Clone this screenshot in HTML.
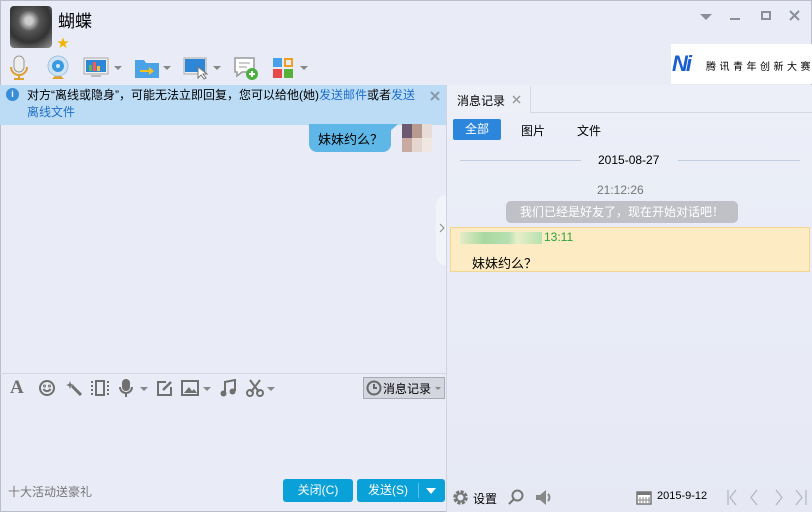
<!DOCTYPE html>
<html><head><meta charset="utf-8"><style>
*{margin:0;padding:0;box-sizing:border-box}
body{width:812px;height:512px;overflow:hidden;background:#e9ebf6;font-family:"Liberation Sans","Noto Sans CJK SC",sans-serif;font-size:12px;color:#000;position:relative}
.a{position:absolute}
.arr{position:absolute;width:0;height:0;border-left:4px solid transparent;border-right:4px solid transparent;border-top:4px solid #888}
svg{position:absolute}
</style></head><body>
<div class="a" style="left:0;top:0;width:812px;height:512px;border:1px solid #b9bccb"></div>
<!-- avatar -->
<div class="a" style="left:10px;top:6px;width:42px;height:42px;border-radius:4px;background:radial-gradient(circle at 45% 35%,#ccc 0 10%,#555 30%,#333 60%,#999 100%)"></div>
<div class="a" style="left:58px;top:7px;font-size:17px">蝴蝶</div>
<div class="a" style="left:57px;top:34px;color:#f0b400;font-size:12px">★</div>
<!-- window controls -->
<div class="arr" style="left:700px;top:14px;border-width:6px 6px 0 6px;border-top-color:#8a8f99"></div>
<div class="a" style="left:730px;top:18px;width:10px;height:2px;background:#8a8f99"></div>
<div class="a" style="left:761px;top:11px;width:10px;height:9px;border:2px solid #8a8f99"></div>
<svg style="left:789px;top:10px" width="11" height="11"><path d="M1 1L10 10M10 1L1 10" stroke="#8a8f99" stroke-width="2"/></svg>
<!-- toolbar -->
<svg style="left:8px;top:55px" width="22" height="26"><rect x="6" y="1" width="10" height="16" rx="5" fill="#eee" stroke="#999"/><path d="M3 12a8 8 0 0 0 16 0M11 20v4M6 24h10" stroke="#e0a030" stroke-width="2" fill="none"/></svg>
<svg style="left:45px;top:55px" width="26" height="26"><path d="M7 24l6-6 6 6z" fill="#e0a030"/><circle cx="13" cy="11" r="10" fill="#cfe3f5" stroke="#9fc1e0"/><circle cx="13" cy="11" r="6" fill="#3a9ae0"/><circle cx="13" cy="11" r="2" fill="#cfe8fa"/></svg>
<svg style="left:83px;top:57px" width="26" height="22"><rect x="1" y="1" width="24" height="16" fill="#eee" stroke="#aaa"/><rect x="3" y="3" width="20" height="12" fill="#2d86d6"/><rect x="6" y="8" width="3" height="6" fill="#5b5"/><rect x="10" y="5" width="3" height="9" fill="#f55"/><rect x="14" y="9" width="3" height="5" fill="#fb3"/><rect x="8" y="18" width="10" height="2" fill="#bbb"/></svg>
<div class="arr" style="left:114px;top:66px"></div>
<svg style="left:134px;top:57px" width="26" height="22"><path d="M1 3h9l2 3h13v15H1z" fill="#4aa3e6"/><path d="M6 13h9v-3l5 4-5 4v-3H6z" fill="#f5c020"/></svg>
<div class="arr" style="left:163px;top:66px"></div>
<svg style="left:183px;top:56px" width="28" height="24"><rect x="1" y="2" width="22" height="16" fill="#eee" stroke="#aaa"/><rect x="2" y="3" width="20" height="13" fill="#2d86d6"/><path d="M15 11v11l3-3 3 4 2-1-3-4h4z" fill="#fff" stroke="#777"/></svg>
<div class="arr" style="left:213px;top:66px"></div>
<svg style="left:233px;top:56px" width="26" height="26"><path d="M2 2h19v14H9l-5 4v-4H2z" fill="#fff" stroke="#999" stroke-width="1.5"/><path d="M6 7h11M6 11h8" stroke="#999"/><circle cx="19" cy="18" r="6" fill="#4ab040"/><path d="M19 15v6M16 18h6" stroke="#fff" stroke-width="2"/></svg>
<div class="a" style="left:273px;top:58px;width:9px;height:9px;background:#4aa0e8"></div>
<div class="a" style="left:284px;top:58px;width:9px;height:9px;border:2px solid #f0a020"></div>
<div class="a" style="left:273px;top:69px;width:9px;height:9px;background:#e84848"></div>
<div class="a" style="left:284px;top:69px;width:9px;height:9px;background:#58b038"></div>
<div class="arr" style="left:300px;top:66px"></div>
<!-- ad -->
<div class="a" style="left:671px;top:44px;width:141px;height:40px;background:#fff"></div>
<div class="a" style="left:672px;top:51px;font-style:italic;font-weight:bold;font-size:22px;color:#1a5fd0;letter-spacing:-2px">Ni</div>
<div class="a" style="left:706px;top:58px;font-size:10px;letter-spacing:3.5px;white-space:nowrap">腾讯青年创新大赛</div>
<!-- notice -->
<div class="a" style="left:0;top:85px;width:446px;height:40px;background:#bcdcf5"></div>
<div class="a" style="left:6px;top:88px;width:13px;height:13px;border-radius:50%;background:#3a8ed8;color:#fff;font-size:9px;text-align:center;line-height:13px;font-weight:bold">i</div>
<div class="a" style="left:27px;top:87px;width:395px;line-height:17px">对方“离线或隐身”，可能无法立即回复，您可以给他(她)<span style="color:#1e6fc8">发送邮件</span>或者<span style="color:#1e6fc8">发送离线文件</span></div>
<svg style="left:430px;top:91px" width="10" height="10"><path d="M1 1L9 9M9 1L1 9" stroke="#8a9aaa" stroke-width="2"/></svg>
<!-- chat bubble -->
<div class="a" style="left:309px;top:124px;width:82px;height:28px;background:#5fb7e8;border-radius:0 0 8px 8px;padding:5px 0 0 9px;font-size:13px">妹妹约么？</div>
<div class="a" style="left:389px;top:124px;width:9px;height:8px;background:#5fb7e8;clip-path:polygon(0 0,100% 0,0 100%)"></div>
<div class="a" style="left:402px;top:124px;width:30px;height:28px;background:linear-gradient(90deg,#6e5a70 0 33%,#b79a90 33% 66%,#e8dcd8 66%)"></div>
<div class="a" style="left:402px;top:138px;width:30px;height:14px;background:linear-gradient(90deg,#c8aaa0 0 33%,#e6d6d0 33% 66%,#f0e6e2 66%)"></div>
<!-- splitter -->
<div class="a" style="left:446px;top:85px;width:1px;height:427px;background:#d0d4e0"></div>
<div class="a" style="left:436px;top:195px;width:10px;height:70px;background:#f2f4fa;border-radius:10px 0 0 10px"></div>
<svg style="left:439px;top:223px" width="6" height="10"><path d="M1 1l4 4-4 4" stroke="#888" fill="none"/></svg>
<!-- input toolbar -->
<div class="a" style="left:0;top:373px;width:446px;height:1px;background:#d4d7e2"></div>
<div class="a" style="left:10px;top:377px;color:#707070;font-size:19px;font-family:'Liberation Serif',serif;font-weight:bold">A</div>
<svg style="left:38px;top:379px" width="18" height="18" fill="none" stroke="#707070" stroke-width="2"><circle cx="9" cy="9" r="7"/><path d="M5.5 10a4 4 0 0 0 7 0"/><circle cx="6.5" cy="7" r=".5"/><circle cx="11.5" cy="7" r=".5"/></svg>
<svg style="left:66px;top:380px" width="16" height="16"><path d="M4 1l1 3 3 1-3 1-1 3-1-3-3-1 3-1z" fill="#707070"/><path d="M6 6l9 9" stroke="#707070" stroke-width="3"/></svg>
<svg style="left:90px;top:379px" width="20" height="18" fill="none" stroke="#707070" stroke-width="2"><rect x="6" y="2" width="8" height="14"/><path d="M2 2v14M18 2v14" stroke-dasharray="2 2"/></svg>
<svg style="left:119px;top:378px" width="14" height="20"><rect x="3" y="1" width="8" height="12" rx="4" fill="#707070"/><path d="M1 9a6 6 0 0 0 12 0M7 15v4" stroke="#707070" stroke-width="2" fill="none"/></svg>
<div class="arr" style="left:140px;top:387px"></div>
<svg style="left:156px;top:379px" width="18" height="18" fill="none" stroke="#707070" stroke-width="2"><path d="M10 3H2v13h13V8"/><path d="M7 11l8-8" stroke-width="2.5"/></svg>
<svg style="left:181px;top:380px" width="18" height="16"><rect x="1" y="1" width="16" height="14" fill="none" stroke="#707070" stroke-width="2"/><path d="M3 13l5-6 3 4 2-2 3 4z" fill="#707070"/></svg>
<div class="arr" style="left:203px;top:387px"></div>
<svg style="left:220px;top:379px" width="16" height="18"><path d="M5 14V3l10-2v11" stroke="#707070" stroke-width="2" fill="none"/><circle cx="3.5" cy="14.5" r="3" fill="#707070"/><circle cx="12.5" cy="12.5" r="3" fill="#707070"/></svg>
<svg style="left:246px;top:379px" width="18" height="18" fill="none" stroke="#707070" stroke-width="2"><path d="M4 1l9 12M14 1L5 13"/><circle cx="4" cy="14" r="3"/><circle cx="14" cy="14" r="3"/></svg>
<div class="arr" style="left:267px;top:387px"></div>
<div class="a" style="left:363px;top:377px;width:82px;height:22px;background:#d4d6df;border:1px solid #a8aab4"></div>
<svg style="left:366px;top:380px" width="16" height="16" fill="none" stroke="#666" stroke-width="2"><circle cx="8" cy="8" r="6.5"/><path d="M8 4v4h3"/></svg>
<div class="a" style="left:383px;top:380px;font-size:12px">消息记录</div>
<div class="arr" style="left:435px;top:387px;border-width:3px"></div>
<!-- bottom left -->
<div class="a" style="left:8px;top:483px;color:#777">十大活动送豪礼</div>
<div class="a" style="left:283px;top:479px;width:70px;height:23px;background:#0aa0d8;border-radius:3px;color:#fff;text-align:center;line-height:23px">关闭(C)</div>
<div class="a" style="left:357px;top:479px;width:88px;height:23px;background:#0aa0d8;border-radius:3px;color:#fff;line-height:23px;padding-left:11px">发送(S)</div>
<div class="a" style="left:418px;top:483px;width:1px;height:15px;background:#5cc0e8"></div>
<div class="a" style="left:426px;top:488px;border-left:5px solid transparent;border-right:5px solid transparent;border-top:6px solid #fff"></div>
<!-- right panel -->
<div class="a" style="left:447px;top:85px;width:365px;height:427px;background:linear-gradient(#eceff8,#e6e9f4)"></div>
<div class="a" style="left:447px;top:112px;width:365px;height:1px;background:#d4d8e4"></div>
<div class="a" style="left:447px;top:86px;width:84px;height:27px;background:#eef0f8;border-right:1px solid #d4d8e4"></div>
<div class="a" style="left:457px;top:92px;font-size:12px">消息记录</div>
<svg style="left:512px;top:95px" width="9" height="9"><path d="M1 1L8 8M8 1L1 8" stroke="#999" stroke-width="1.5"/></svg>
<div class="a" style="left:453px;top:119px;width:48px;height:21px;background:#2b86dc;border-radius:2px;color:#fff;text-align:center;line-height:21px">全部</div>
<div class="a" style="left:521px;top:122px">图片</div>
<div class="a" style="left:577px;top:122px">文件</div>
<div class="a" style="left:460px;top:160px;width:121px;height:1px;background:#c5cde0"></div>
<div class="a" style="left:678px;top:160px;width:122px;height:1px;background:#c5cde0"></div>
<div class="a" style="left:598px;top:153px;font-size:12px">2015-08-27</div>
<div class="a" style="left:597px;top:183px;color:#777">21:12:26</div>
<div class="a" style="left:506px;top:201px;width:232px;height:22px;background:#bfc1c7;border-radius:5px;color:#fff;text-align:center;line-height:22px">我们已经是好友了，现在开始对话吧！</div>
<div class="a" style="left:450px;top:227px;width:360px;height:45px;background:#fdecc3;border:1px solid #f5d690"></div>
<div class="a" style="left:460px;top:232px;width:82px;height:12px;background:linear-gradient(90deg,#e5ecc8,#a8d8a0 30%,#b8e0b0 60%,#e8efc8 70%,#b8e0b0)"></div>
<div class="a" style="left:544px;top:230px;color:#2aa23a">13:11</div>
<div class="a" style="left:472px;top:253px;font-size:13px">妹妹约么？</div>
<!-- bottom right -->
<svg style="left:452px;top:489px" width="17" height="17"><circle cx="8.5" cy="8.5" r="5.5" fill="none" stroke="#777" stroke-width="3.5" stroke-dasharray="3 1.3"/><circle cx="8.5" cy="8.5" r="4" fill="none" stroke="#777" stroke-width="2"/></svg>
<div class="a" style="left:473px;top:490px">设置</div>
<svg style="left:508px;top:489px" width="16" height="16" fill="none" stroke="#777" stroke-width="2"><circle cx="9.5" cy="6.5" r="5"/><path d="M6 10l-5 5"/></svg>
<svg style="left:535px;top:489px" width="18" height="17"><path d="M1 6h4l6-5v15l-6-5H1z" fill="#888"/><path d="M13 5a5 5 0 0 1 0 7" stroke="#888" stroke-width="2" fill="none"/></svg>
<svg style="left:636px;top:489px" width="16" height="16"><rect x="1" y="3" width="14" height="12" fill="#fff" stroke="#777" stroke-width="1.5"/><rect x="1" y="3" width="14" height="3" fill="#777"/><path d="M4 8v6M7 8v6M10 8v6M13 8v6M2 11h12" stroke="#888"/></svg>
<div class="a" style="left:657px;top:490px;font-size:11px">2015-9-12</div>
<svg style="left:726px;top:489px" width="86" height="17" fill="none" stroke="#b4b8c4" stroke-width="1.3"><path d="M2 1v15M10 1L4 8.5 10 16M31 1l-6 7.5 6 7.5M50 1l6 7.5-6 7.5M70 1l6 7.5-6 7.5M80 1v15"/></svg>
</body></html>
